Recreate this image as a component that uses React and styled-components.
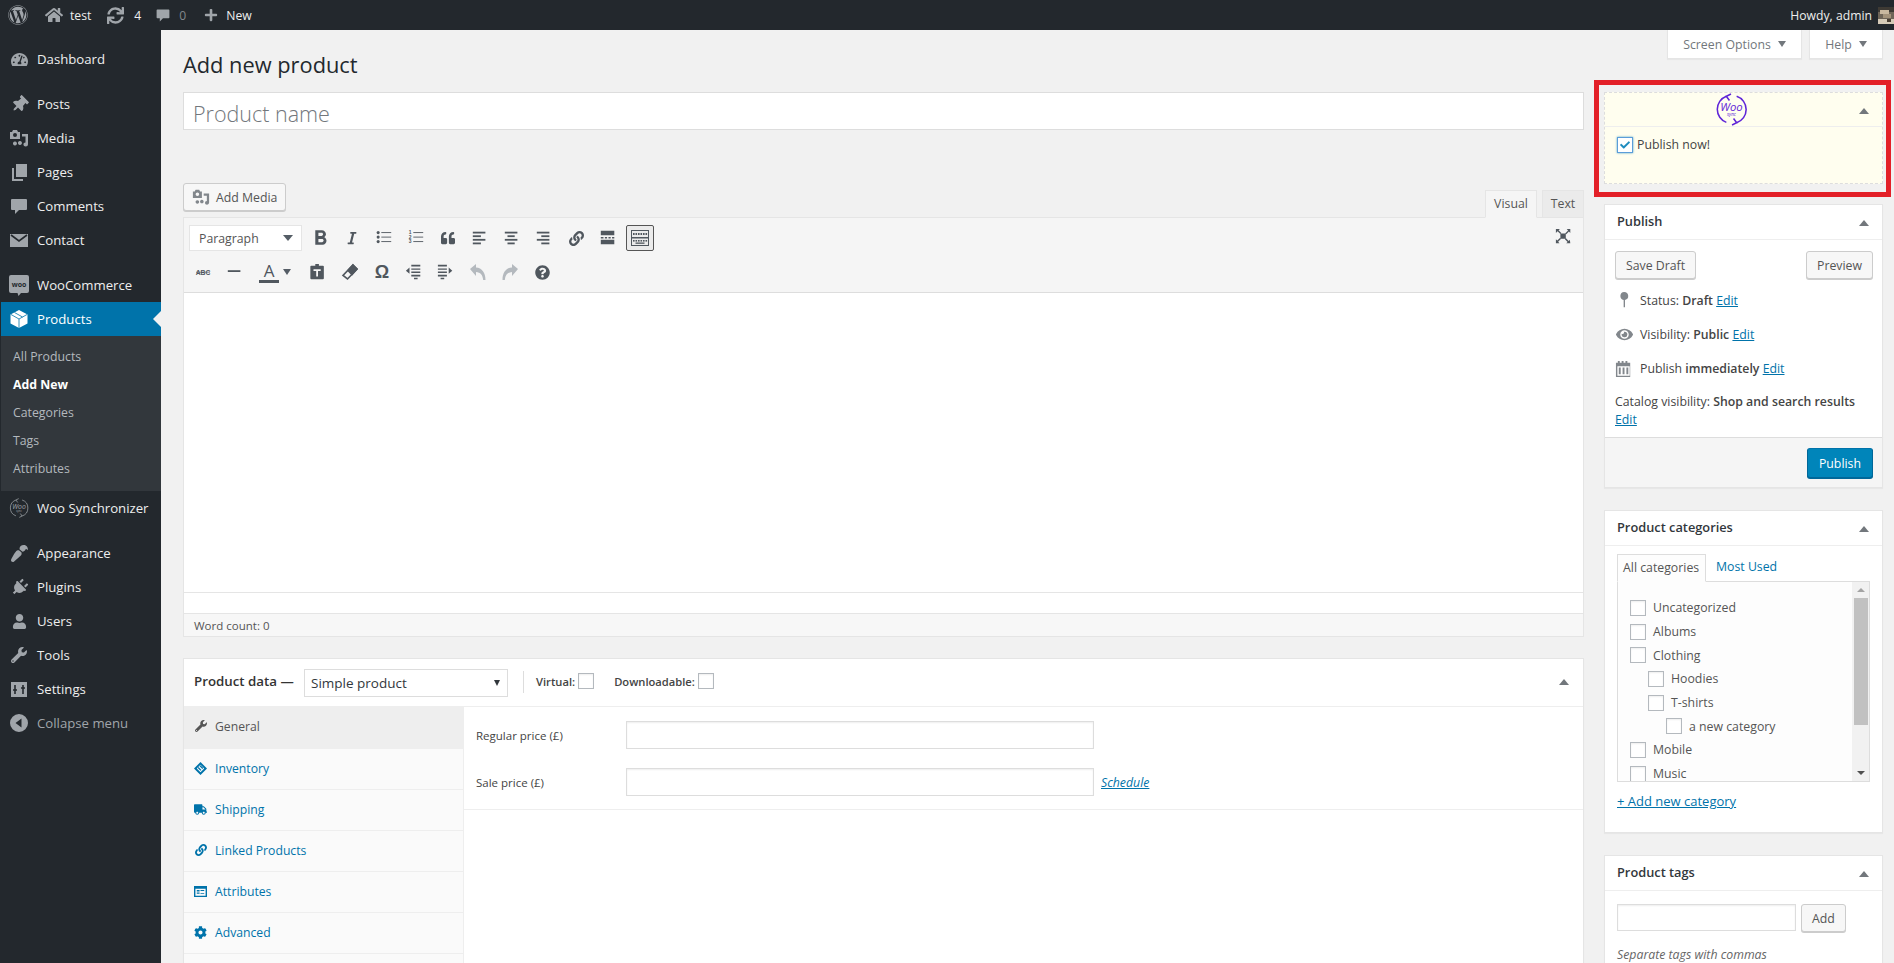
import React from 'react';
import styled, { createGlobalStyle } from 'styled-components';
import {
  FaWordpress, FaHome, FaSync, FaPlus, FaTachometerAlt, FaThumbtack, FaPaintBrush, FaPlug, FaUser, FaWrench,
  FaItalic, FaQuoteLeft, FaLink, FaQuestionCircle, FaEye, FaTruck, FaCog, FaCheck,
} from 'react-icons/fa';
import { MdFormatBold } from 'react-icons/md';

const Global = createGlobalStyle`
  html, body { margin: 0; padding: 0; height: 100%; overflow: hidden; background: #f1f1f1; }
  body { font-family: "Open Sans", "Liberation Sans", sans-serif; font-size: 12.3px; color: #444; }
  * { box-sizing: border-box; }
  input::placeholder { color: #72777c; }
`;

const Page = styled.div`
  width: 1894px;
  height: 963px;
  overflow: hidden;
  display: flex;
  flex-direction: column;
`;

const TopBar = styled.header`
  height: 30px;
  flex: none;
  background: #23282d;
  display: flex;
  align-items: center;
  color: #eee;
  padding-left: 8px;
  font-size: 12.2px;
`;

const TopItem = styled.span`
  display: flex;
  align-items: center;
  gap: ${(p) => p.$gap || 7}px;
  margin-right: ${(p) => p.$mr || 18}px;
  color: ${(p) => (p.$dim ? '#82878c' : '#eee')};
  svg { color: #a0a5aa; }
`;

const TopRight = styled.span`
  margin-left: auto;
  display: flex;
  align-items: center;
  gap: 6px;
`;

const Avatar = styled.svg`
  width: 16px;
  height: 17px;
  display: block;
`;

const Body = styled.div`
  flex: 1;
  display: flex;
  min-height: 0;
`;

const Sidebar = styled.nav`
  width: 161px;
  flex: none;
  background: #23282d;
  padding-top: 12px;
  color: #eee;
  font-size: 13.2px;
`;

const MenuItem = styled.div`
  position: relative;
  height: 34px;
  display: flex;
  align-items: center;
  gap: 8px;
  padding-left: ${(p) => (p.$active ? 8 : 9)}px;
  margin-top: ${(p) => (p.$gap ? 11 : 0)}px;
  margin-left: ${(p) => (p.$active ? 1 : 0)}px;
  background: ${(p) => (p.$active ? '#0073aa' : 'transparent')};
  color: ${(p) => (p.$active ? '#fff' : p.$muted ? '#a0a5aa' : '#eee')};
  &::after {
    content: ${(p) => (p.$active ? "''" : 'none')};
    position: absolute;
    right: 0;
    top: 9px;
    border: 8px solid transparent;
    border-right-color: #f1f1f1;
  }
`;

const MenuIcon = styled.span`
  width: 20px;
  height: 20px;
  flex: none;
  display: flex;
  align-items: center;
  justify-content: center;
  color: ${(p) => (p.$active ? '#fff' : '#a0a5aa')};
`;

const SubMenu = styled.div`
  background: #32373c;
  margin-left: 1px;
  padding: 7px 0 8px;
  height: 155px;
`;

const SubItem = styled.div`
  height: 28px;
  line-height: 28px;
  padding-left: 12px;
  font-size: 12.3px;
  color: ${(p) => (p.$active ? '#fff' : '#b4b9be')};
  font-weight: ${(p) => (p.$active ? 700 : 400)};
`;

const Main = styled.main`
  flex: 1;
  display: flex;
  gap: 20px;
  padding: 0 11px 0 22px;
  min-width: 0;
`;

const LeftCol = styled.div`
  width: 1401px;
  flex: none;
  padding-top: 20px;
`;

const RightCol = styled.aside`
  width: 279px;
  flex: none;
`;

const Title = styled.h1`
  margin: 0;
  height: 30px;
  line-height: 30px;
  font-size: 21.8px;
  font-weight: 400;
  color: #23282d;
`;

const TitleInput = styled.input`
  display: block;
  width: 100%;
  height: 38px;
  margin-top: 12px;
  padding: 4px 9px 0;
  border: 1px solid #ddd;
  background: #fff;
  font: 300 21.5px "Open Sans", sans-serif;
  outline: none;
`;

const EditorHead = styled.div`
  margin-top: 53px;
  height: 34px;
  display: flex;
  justify-content: space-between;
  align-items: flex-end;
`;

const Button = styled.span`
  display: inline-flex;
  align-items: center;
  gap: ${(p) => p.$gap || 0}px;
  height: 28px;
  padding: 0 ${(p) => p.$pad || 10}px;
  border: 1px solid #ccc;
  border-radius: 3px;
  background: #f7f7f7;
  box-shadow: 0 1px 0 #ccc;
  color: #555;
  flex: none;
`;

const AddMedia = styled(Button)`
  align-self: flex-start;
  svg { color: #82878c; }
`;

const ModeTabs = styled.div`
  display: flex;
  gap: 5px;
`;

const ModeTab = styled.span`
  height: 28px;
  width: ${(p) => p.$w}px;
  display: flex;
  align-items: center;
  justify-content: center;
  padding-bottom: 2px;
  border: 1px solid #e5e5e5;
  border-bottom: ${(p) => (p.$active ? '1px solid #f5f5f5' : '1px solid #e5e5e5')};
  background: ${(p) => (p.$active ? '#f5f5f5' : '#ebebeb')};
  color: #555;
  margin-bottom: -1px;
  position: relative;
`;

const Editor = styled.section`
  height: 420px;
  border: 1px solid #e5e5e5;
  background: #fff;
  display: flex;
  flex-direction: column;
`;

const Toolbar = styled.div`
  height: 75px;
  flex: none;
  background: #f5f5f5;
  border-bottom: 1px solid #ddd;
  padding: 7px 5px 0;
  display: flex;
  flex-direction: column;
  gap: 8px;
  position: relative;
`;

const ToolRow = styled.div`
  display: flex;
  gap: 4px;
  height: 26px;
`;

const SelectBox = styled.span`
  width: 113px;
  height: 26px;
  flex: none;
  display: flex;
  align-items: center;
  justify-content: space-between;
  padding: 0 8px 0 9px;
  background: #fff;
  border: 1px solid #e5e5e5;
  color: #555;
`;

const Caret = styled.i`
  display: block;
  width: 0;
  height: 0;
  flex: none;
  border-left: ${(p) => p.$w || 4}px solid transparent;
  border-right: ${(p) => p.$w || 4}px solid transparent;
  ${(p) => (p.$up ? 'border-bottom' : 'border-top')}: ${(p) => p.$h || 6}px solid ${(p) => p.$c || '#555d66'};
`;

const ToolBtn = styled.span`
  width: ${(p) => p.$w || 28}px;
  height: 26px;
  flex: none;
  display: flex;
  align-items: center;
  justify-content: ${(p) => (p.$w ? 'flex-start' : 'center')};
  gap: 4px;
  padding-left: ${(p) => (p.$w ? 5 : 0)}px;
  color: ${(p) => (p.$off ? '#b4b9be' : '#50575e')};
  border: 1px solid ${(p) => (p.$on ? '#555' : 'transparent')};
  border-radius: ${(p) => (p.$on ? 2 : 0)}px;
  background: ${(p) => (p.$on ? '#ebebeb' : 'transparent')};
  font: 700 18px "Liberation Sans", sans-serif;
`;

const FullScreen = styled.span`
  position: absolute;
  right: 10px;
  top: 10px;
  color: #50575e;
`;

const ColorA = styled.span`
  display: block;
  font: 400 17px/18px "Open Sans", sans-serif;
  border-bottom: 3px solid #50575e;
  width: 20px;
  text-align: center;
`;

const EditArea = styled.div`
  flex: 1;
  border-bottom: 1px solid #e5e5e5;
`;

const EditPad = styled.div`
  height: 21px;
  flex: none;
  border-bottom: 1px solid #e5e5e5;
`;

const StatusBar = styled.div`
  height: 22px;
  flex: none;
  display: flex;
  align-items: center;
  padding-left: 10px;
  background: #f7f7f7;
  font-size: 11.5px;
  color: #555;
`;

const Postbox = styled.section`
  background: #fff;
  border: 1px solid #e5e5e5;
  box-shadow: 0 1px 1px rgba(0, 0, 0, 0.04);
  margin-top: ${(p) => p.$mt || 0}px;
`;

const ProductBox = styled(Postbox)`
  height: 400px;
`;

const DataHead = styled.div`
  height: 48px;
  display: flex;
  align-items: center;
  padding: 0 14px 0 10px;
  border-bottom: 1px solid #eee;
`;

const DataTitle = styled.strong`
  width: 110px;
  flex: none;
  margin-bottom: 3px;
  font-size: 13.3px;
  font-weight: 600;
  color: #333;
`;

const DataSelect = styled.span`
  width: 204px;
  height: 28px;
  flex: none;
  display: flex;
  align-items: center;
  justify-content: space-between;
  padding: 0 7px 0 6px;
  border: 1px solid #ddd;
  font-size: 13.5px;
  color: #32373c;
`;

const VDivider = styled.span`
  width: 1px;
  height: 22px;
  background: #ddd;
  margin: 0 12px 2px 15px;
`;

const CheckLabel = styled.label`
  display: flex;
  align-items: center;
  gap: 3px;
  margin: 0 20px 3px 0;
  font-size: 11.2px;
  font-weight: 600;
  color: #444;
`;

const Box16 = styled.span`
  width: 16px;
  height: 16px;
  flex: none;
  display: flex;
  align-items: center;
  justify-content: center;
  background: #fff;
  border: 1px solid ${(p) => (p.$focus ? '#5b9dd9' : '#b4b9be')};
  box-shadow: ${(p) => (p.$focus ? '0 0 2px rgba(30,140,190,.8)' : 'inset 0 1px 2px rgba(0,0,0,.07)')};
  color: #1e8cbe;
`;

const Spacer = styled.span`
  flex: 1;
`;

const DataToggle = styled.span`
  margin-bottom: 2px;
`;

const DataBody = styled.div`
  display: flex;
  height: 260px;
`;

const DataTabs = styled.ul`
  list-style: none;
  margin: 0;
  padding: 0;
  width: 280px;
  flex: none;
  background: #fafafa;
  border-right: 1px solid #eee;
`;

const DataTab = styled.li`
  height: ${(p) => (p.$active ? 42 : 41)}px;
  display: flex;
  align-items: flex-start;
  gap: 8px;
  padding: 12px 0 0 10px;
  border-bottom: 1px solid #eee;
  background: ${(p) => (p.$active ? '#eee' : 'transparent')};
  color: ${(p) => (p.$active ? '#555' : '#0073aa')};
  font-size: 12.2px;
  line-height: 16px;
`;

const TabIcon = styled.span`
  width: 13px;
  height: 14px;
  flex: none;
  display: flex;
  align-items: center;
  justify-content: center;
`;

const Fields = styled.div`
  flex: 1;
  min-width: 0;
`;

const FieldGroup = styled.div`
  padding: 14px 0 13px 12px;
  border-bottom: 1px solid #eee;
  display: flex;
  flex-direction: column;
  gap: 19px;
`;

const FieldRow = styled.div`
  display: flex;
  align-items: center;
  gap: 7px;
`;

const FieldLabel = styled.span`
  width: 143px;
  font-size: 11.5px;
  color: #444;
`;

const TextBox = styled.input`
  display: block;
  width: ${(p) => p.$w}px;
  height: ${(p) => p.$h || 28}px;
  border: 1px solid #ddd;
  background: #fff;
  box-shadow: inset 0 1px 2px rgba(0, 0, 0, 0.07);
  outline: none;
`;

const Link = styled.a`
  color: #0073aa;
  text-decoration: underline;
  font-style: ${(p) => (p.$italic ? 'italic' : 'normal')};
  font-size: ${(p) => p.$size || 12.3}px;
`;

const ScreenMeta = styled.div`
  height: 29px;
  display: flex;
  justify-content: flex-end;
  gap: 7px;
`;

const MetaTab = styled.span`
  width: ${(p) => p.$w}px;
  display: flex;
  align-items: center;
  justify-content: center;
  gap: 7px;
  background: #fff;
  border: 1px solid #e5e5e5;
  border-top: none;
  box-shadow: 0 1px 1px rgba(0, 0, 0, 0.04);
  color: #72777c;
`;

const RedFrame = styled.div`
  margin: 21px -8px 7px -10px;
  padding: 7px 3px 8px 5px;
  border: 5px solid #e32028;
`;

const SyncBox = styled.div`
  height: 92px;
  background: #fffeef;
  border: 1px dashed #ddd;
`;

const SyncHead = styled.div`
  height: 34px;
  position: relative;
  display: flex;
  align-items: center;
  justify-content: center;
  padding-right: 24px;
  border-bottom: 1px solid #eee;
`;

const ToggleCorner = styled.span`
  position: absolute;
  right: 13px;
  top: 15px;
`;

const SyncRow = styled.label`
  display: flex;
  align-items: center;
  gap: 4px;
  padding: 9px 0 0 12px;
  font-size: 12.3px;
`;

const BoxHead = styled.div`
  position: relative;
  height: 35px;
  display: flex;
  align-items: center;
  padding: 0 0 2px 12px;
  border-bottom: 1px solid #eee;
  font-size: 12.8px;
  font-weight: 600;
  color: #32373c;
`;

const PublishActions = styled.div`
  display: flex;
  justify-content: space-between;
  padding: 11px 9px 0 10px;
`;

const MetaRows = styled.div`
  padding: 4px 10px 0;
  display: flex;
  flex-direction: column;
`;

const MetaRow = styled.div`
  height: 34px;
  display: flex;
  align-items: center;
  gap: 6px;
  white-space: nowrap;
`;

const MetaIcon = styled.span`
  width: 19px;
  flex: none;
  display: flex;
  justify-content: center;
  color: #82878c;
`;

const CatalogRow = styled.div`
  padding: 8px 10px 0;
  line-height: 18px;
  height: 52px;
`;

const Strong = styled.b`
  font-weight: 600;
`;

const PublishFoot = styled.div`
  height: 50px;
  display: flex;
  justify-content: flex-end;
  align-items: flex-start;
  padding: 10px 9px 0;
  background: #f5f5f5;
  border-top: 1px solid #ddd;
`;

const PrimaryButton = styled(Button)`
  height: 30px;
  background: #0085ba;
  border-color: #0073aa #006799 #006799;
  box-shadow: 0 1px 0 #006799;
  color: #fff;
`;

const CatBody = styled.div`
  padding: 8px 12px 0;
  height: 286px;
`;

const CatTabs = styled.div`
  display: flex;
  align-items: flex-end;
  height: 27px;
`;

const CatTab = styled.span`
  height: ${(p) => (p.$active ? 28 : 27)}px;
  margin-bottom: ${(p) => (p.$active ? -1 : 0)}px;
  padding: 0 ${(p) => (p.$active ? 5 : 10)}px 2px;
  width: ${(p) => (p.$active ? '89px' : 'auto')};
  display: flex;
  align-items: center;
  border: ${(p) => (p.$active ? '1px solid #ddd' : 'none')};
  border-bottom-color: #fdfdfd;
  background: ${(p) => (p.$active ? '#fdfdfd' : 'transparent')};
  color: ${(p) => (p.$active ? '#555' : '#0073aa')};
  position: relative;
  white-space: nowrap;
`;

const CatPanel = styled.div`
  height: 201px;
  border: 1px solid #ddd;
  background: #fdfdfd;
  display: flex;
  overflow: hidden;
`;

const CatList = styled.div`
  flex: 1;
  padding: 14px 0 0 12px;
`;

const CatRow = styled.div`
  height: 23.7px;
  display: flex;
  align-items: center;
  gap: 7px;
  padding-left: ${(p) => (p.$level || 0) * 18}px;
  color: #555;
`;

const Scrollbar = styled.div`
  width: 17px;
  flex: none;
  display: flex;
  flex-direction: column;
  align-items: center;
  background: #f1f1f1;
`;

const ScrollArrow = styled.span`
  height: 16px;
  flex: none;
  display: flex;
  align-items: center;
  justify-content: center;
`;

const ScrollThumb = styled.span`
  width: 14px;
  height: 127px;
  background: #c1c1c1;
`;

const ScrollGap = styled.span`
  flex: 1;
`;

const AddCategory = styled.div`
  margin-top: 10px;
`;

const TagsBody = styled.div`
  padding: 13px 12px 0;
`;

const TagRow = styled.div`
  display: flex;
  gap: 5px;
`;

const Hint = styled.div`
  margin-top: 14px;
  font-style: italic;
  color: #666;
`;

const Ico = styled.svg.attrs({ viewBox: '0 0 20 20' })`
  width: ${(p) => p.$s || 20}px;
  height: ${(p) => p.$s || 20}px;
  display: block;
  flex: none;
  fill: currentColor;
`;

const Turned = styled.span`
  display: flex;
  transform: rotate(${(p) => p.$deg}deg);
`;

const BubbleIcon = ({ s }) => (
  <Ico $s={s}>
    <path d="M3 3h14a1 1 0 0 1 1 1v9a1 1 0 0 1-1 1H10l-4 4v-4H3a1 1 0 0 1-1-1V4a1 1 0 0 1 1-1z" />
  </Ico>
);

const MediaIcon = ({ s }) => (
  <Ico $s={s}>
    <path fillRule="evenodd" d="M1 4h2l1-2h4l1 2h2v7H1zM6 5a2 2 0 1 0 0 4 2 2 0 0 0 0-4z" />
    <path d="M13 6h6v10.5a2.3 2 0 1 1-2.5-2V8.500H13zM6 13.500a2 2 0 1 1-.1 0zM11 13a2 2 0 1 1-.1 0z" />
  </Ico>
);

const PagesIcon = ({ s }) => (
  <Ico $s={s}>
    <path d="M7 2h11v13H7z" />
    <path d="M3 6h2v11h9v2H3z" />
  </Ico>
);

const MailIcon = () => (
  <Ico>
    <path d="M1 4h18v13H1z" />
    <path d="M2 5l8 6 8-6" fill="none" stroke="#23282d" strokeWidth="1.6" />
  </Ico>
);

const WooBubble = () => (
  <svg width="20" height="21" viewBox="0 0 20 21">
    <path d="M2 0h16a2 2 0 0 1 2 2v14a2 2 0 0 1-2 2h-6l-2.500 3-1-3H2a2 2 0 0 1-2-2V2a2 2 0 0 1 2-2z" fill="#a0a5aa" />
    <text x="10" y="11.500" fontSize="7" fontWeight="700" textAnchor="middle" fill="#23282d" fontFamily="Open Sans">woo</text>
  </svg>
);

const CubeIcon = () => (
  <svg width="20" height="20" viewBox="0 0 20 20">
    <path d="M10 1l8.500 4.500v9L10 19l-8.500-4.500v-9z" fill="#fff" />
    <path d="M2 5.500L10 10l8-4.500M10 10v9M5.500 3.500l8 4.500" fill="none" stroke="#0073aa" strokeWidth="0.8" />
  </svg>
);

const SyncLogo = ({ size, color, weight }) => (
  <svg width={size} height={size} viewBox="0 0 32 32" fill="none" stroke={color} strokeWidth={weight || 1.5}>
    <path d="M11 3.200A13.500 13.500 0 0 0 11 28.500" />
    <path d="M21 28.800A13.500 13.500 0 0 0 21 3.200" />
    <path d="M15.500 1L11 3.200l3 4M16.500 31l4.500-2.200-3-4" />
    <text x="16" y="17" fontSize="11" fontStyle="italic" textAnchor="middle" fill={color} stroke="none" fontFamily="Open Sans">Woo</text>
    <text x="16" y="22.500" fontSize="4.500" fontStyle="italic" textAnchor="middle" fill={color} stroke="none" fontFamily="Open Sans">sync</text>
  </svg>
);

const SlidersIcon = () => (
  <Ico>
    <path d="M2 3h16v15H2z" />
    <path d="M6 6v9M14 6v9M4 11h4M12 9h4" fill="none" stroke="#23282d" strokeWidth="1.6" />
  </Ico>
);

const CollapseIcon = () => (
  <Ico>
    <path fillRule="evenodd" d="M10 1a9 9 0 1 1 0 18 9 9 0 0 1 0-18zM12.500 5.500L6.500 10l6 4.500z" />
  </Ico>
);

const PinIcon = () => (
  <Ico $s={18}>
    <path d="M9 1a4.500 4.500 0 0 1 1 8.900V18H8.500V9.900A4.500 4.500 0 0 1 9 1z" />
  </Ico>
);

const CalendarIcon = () => (
  <Ico $s={19}>
    <path fillRule="evenodd" d="M1 4h2V2h2v2h2V2h2v2h2V2h2v2h3v15H1zM2.500 7.500v10h13v-10zM4 9h2v7H4zM8 9h2v7H8zM12 9h2v7h-2z" />
  </Ico>
);

const Lines = ({ rows }) => (
  <Ico $s={18}>
    {rows.map(([x, w], i) => (
      <rect key={i} x={x} y={3 + i * 4} width={w} height="2" />
    ))}
  </Ico>
);

const BulletIcon = ({ numbered }) => (
  <Ico $s={18}>
    {[4, 9, 14].map((y, i) => (
      <g key={y}>
        {numbered ? (
          <text x="3.500" y={y + 2} fontSize="5.500" fontWeight="700" textAnchor="middle" fontFamily="Liberation Sans">{i + 1}</text>
        ) : (
          <circle cx="3.500" cy={y} r="1.700" />
        )}
        <rect x="7" y={y - 0.5} width="11" height="1" />
      </g>
    ))}
  </Ico>
);

const MoreIcon = () => (
  <Ico $s={18}>
    <path d="M2 2h15v5H2zM2 12h15v5H2zM2 9h3v1.500H2zM6.500 9h2.500v1.500H6.500zM10.500 9h2.500v1.500h-2.500zM14.500 9H17v1.500h-2.500z" />
  </Ico>
);

const KeyboardIcon = () => (
  <svg width="20" height="18" viewBox="0 0 20 18" fill="#50575e">
    <path fillRule="evenodd" d="M1 1h18v16H1zM2 2v6h16V2zM2 9.500V16h16V9.500z" />
    {[3, 5.5, 8, 10.5, 13, 15.5].map((x) => (
      <rect key={x} x={x} y="4" width="1.600" height="2" />
    ))}
    {[3, 5.5, 8, 10.5, 13, 15.5].map((x) => (
      <rect key={x} x={x} y="11" width="1.600" height="1.600" />
    ))}
    <rect x="5.500" y="13.500" width="9" height="1.300" />
  </svg>
);

const StrikeAbc = () => (
  <svg width="18" height="18" viewBox="0 0 18 18" fill="#50575e">
    <text x="9" y="11.500" fontSize="6.800" fontWeight="700" textAnchor="middle" fontFamily="Liberation Sans">ABC</text>
    <rect x="2" y="8.800" width="14" height="0.700" />
  </svg>
);

const RuleIcon = () => (
  <Ico $s={18}>
    <rect x="2" y="8" width="14" height="2" />
  </Ico>
);

const PasteIcon = () => (
  <Ico $s={18}>
    <path fillRule="evenodd" d="M7 1h4v2h4.500a1 1 0 0 1 1 1v13a1 1 0 0 1-1 1h-13a1 1 0 0 1-1-1V4a1 1 0 0 1 1-1H7zM5 7v2h3v6h2V9h3V7z" />
  </Ico>
);

const EraserIcon = () => (
  <svg width="18" height="18" viewBox="0 0 18 18" fill="none" stroke="currentColor" strokeWidth="1.600">
    <path d="M12 2l4 4-9.500 10L2 12.500z" />
    <path d="M12 2l4 4-5 5.500-4-4z" fill="currentColor" />
  </svg>
);

const OutdentIcon = ({ flip }) => (
  <Ico $s={18}>
    <g transform={flip ? 'translate(18 0) scale(-1 1)' : undefined}>
      <path d="M7 2h10v2H7zM7 6h10v1.500H7zM7 9.500h10V11H7zM7 13h10v2H7zM10 16.500h4V18h-4zM1 8.500l4-3.500v7z" />
    </g>
  </Ico>
);

const UndoIcon = ({ flip }) => (
  <svg width="18" height="18" viewBox="0 0 18 18" fill="currentColor">
    <g transform={flip ? 'translate(18 0) scale(-1 1)' : undefined}>
      <path d="M1 6l6-5v3.500c6 .5 9.500 5 9.500 12.500h-2.300c-.5-5-2.700-7.700-7.200-8V13z" />
    </g>
  </svg>
);

const ExpandIcon = () => (
  <Ico $s={18}>
    <path d="M6 6h6v6H6zM1 1h4.500L4 2.500 7 5.500l-1.200 1-3-3L1 5.500zM17 1v4.500L15.500 4l-3 3-1-1.200 3-3L13 1zM1 17v-4.500L2.500 14l3-3 1 1.200-3 3L5 17zM17 17h-4.500l1.500-1.500-3-3 1.200-1 3 3 1.300-1.500z" />
  </Ico>
);

const NoteTagIcon = () => (
  <svg width="13" height="13" viewBox="0 0 14 14" fill="currentColor">
    <path fillRule="evenodd" d="M7 0l7 7-7 7-7-7zM7 3L3 7l4 4 4-4z" />
    <path d="M5 5.500l3 3-1 1-3-3zM7 3.500l3 3-1 1-3-3z" />
  </svg>
);

const PanelIcon = () => (
  <svg width="13" height="13" viewBox="0 0 14 14" fill="currentColor">
    <path fillRule="evenodd" d="M0 1h14v12H0zM1.500 4v7.500h11V4zM3 5.500h3v1.500H3zM7 5.500h4v1H7zM3 8h3v1.500H3zM7 8.500h4v1H7z" />
  </svg>
);

const AvatarImage = () => (
  <Avatar viewBox="0 0 16 17">
    <rect width="16" height="17" fill="#6f6558" />
    <rect y="0" width="16" height="5" fill="#3e3a34" />
    <rect x="2" y="3" width="9" height="4" fill="#c9b89f" />
    <rect x="5" y="7" width="8" height="4" fill="#a3927a" />
    <rect y="12" width="16" height="5" fill="#d6cbb8" />
    <rect x="9" y="12" width="4" height="3" fill="#4a3f33" />
  </Avatar>
);

const mainMenu = [
  { label: 'Dashboard', icon: <FaTachometerAlt size={17} /> },
  { label: 'Posts', gap: true, icon: <Turned $deg={45}><FaThumbtack size={17} /></Turned> },
  { label: 'Media', icon: <MediaIcon /> },
  { label: 'Pages', icon: <PagesIcon /> },
  { label: 'Comments', icon: <BubbleIcon /> },
  { label: 'Contact', icon: <MailIcon /> },
  { label: 'WooCommerce', gap: true, icon: <WooBubble /> },
];

const lowerMenu = [
  { label: 'Woo Synchronizer', icon: <SyncLogo size={22} color="#a0a5aa" weight={1.2} /> },
  { label: 'Appearance', gap: true, icon: <Turned $deg={180}><FaPaintBrush size={17} /></Turned> },
  { label: 'Plugins', icon: <Turned $deg={45}><FaPlug size={17} /></Turned> },
  { label: 'Users', icon: <FaUser size={15} /> },
  { label: 'Tools', icon: <FaWrench size={16} /> },
  { label: 'Settings', icon: <SlidersIcon /> },
  { label: 'Collapse menu', muted: true, icon: <CollapseIcon /> },
];

const subMenu = ['All Products', 'Add New', 'Categories', 'Tags', 'Attributes'];

const categories = [
  ['Uncategorized', 0],
  ['Albums', 0],
  ['Clothing', 0],
  ['Hoodies', 1],
  ['T-shirts', 1],
  ['a new category', 2],
  ['Mobile', 0],
  ['Music', 0],
];

const dataTabs = [
  { label: 'General', icon: <FaWrench size={12} />, active: true },
  { label: 'Inventory', icon: <NoteTagIcon /> },
  { label: 'Shipping', icon: <FaTruck size={13} /> },
  { label: 'Linked Products', icon: <FaLink size={12} /> },
  { label: 'Attributes', icon: <PanelIcon /> },
  { label: 'Advanced', icon: <FaCog size={13} /> },
  { label: '', icon: null },
];

const Item = ({ entry }) => (
  <MenuItem $gap={entry.gap} $muted={entry.muted}>
    <MenuIcon>{entry.icon}</MenuIcon>
    {entry.label}
  </MenuItem>
);

function App() {
  return (
    <Page>
      <Global />
      <TopBar>
        <TopItem $mr={17}><FaWordpress size={20} /></TopItem>
        <TopItem $mr={16}><FaHome size={18} />test</TopItem>
        <TopItem $mr={14} $gap={10}><FaSync size={17} />4</TopItem>
        <TopItem $dim $mr={18} $gap={8}><BubbleIcon s={16} />0</TopItem>
        <TopItem $gap={8}><FaPlus size={14} />New</TopItem>
        <TopRight>Howdy, admin<AvatarImage /></TopRight>
      </TopBar>
      <Body>
        <Sidebar>
          {mainMenu.map((m) => <Item key={m.label} entry={m} />)}
          <MenuItem $active>
            <MenuIcon $active><CubeIcon /></MenuIcon>
            Products
          </MenuItem>
          <SubMenu>
            {subMenu.map((s) => (
              <SubItem key={s} $active={s === 'Add New'}>{s}</SubItem>
            ))}
          </SubMenu>
          {lowerMenu.map((m) => <Item key={m.label} entry={m} />)}
        </Sidebar>
        <Main>
          <LeftCol>
            <Title>Add new product</Title>
            <TitleInput placeholder="Product name" />
            <EditorHead>
              <AddMedia $pad={8} $gap={6}><MediaIcon s={18} />Add Media</AddMedia>
              <ModeTabs>
                <ModeTab $w={52} $active>Visual</ModeTab>
                <ModeTab $w={42}>Text</ModeTab>
              </ModeTabs>
            </EditorHead>
            <Editor>
              <Toolbar>
                <ToolRow>
                  <SelectBox>Paragraph<Caret $w={5} $h={6} /></SelectBox>
                  <ToolBtn><MdFormatBold size={25} /></ToolBtn>
                  <ToolBtn><FaItalic size={14} /></ToolBtn>
                  <ToolBtn><BulletIcon /></ToolBtn>
                  <ToolBtn><BulletIcon numbered /></ToolBtn>
                  <ToolBtn><FaQuoteLeft size={14} /></ToolBtn>
                  <ToolBtn><Lines rows={[[2, 14], [2, 9], [2, 14], [2, 9]]} /></ToolBtn>
                  <ToolBtn><Lines rows={[[2, 14], [5, 8], [2, 14], [5, 8]]} /></ToolBtn>
                  <ToolBtn><Lines rows={[[2, 14], [7, 9], [2, 14], [7, 9]]} /></ToolBtn>
                  <ToolBtn><FaLink size={15} /></ToolBtn>
                  <ToolBtn><MoreIcon /></ToolBtn>
                  <ToolBtn $on><KeyboardIcon /></ToolBtn>
                </ToolRow>
                <ToolRow>
                  <ToolBtn><StrikeAbc /></ToolBtn>
                  <ToolBtn><RuleIcon /></ToolBtn>
                  <ToolBtn $w={47}><ColorA>A</ColorA><Caret $w={4} $h={6} /></ToolBtn>
                  <ToolBtn><PasteIcon /></ToolBtn>
                  <ToolBtn><EraserIcon /></ToolBtn>
                  <ToolBtn>Ω</ToolBtn>
                  <ToolBtn><OutdentIcon /></ToolBtn>
                  <ToolBtn><OutdentIcon flip /></ToolBtn>
                  <ToolBtn $off><UndoIcon /></ToolBtn>
                  <ToolBtn $off><UndoIcon flip /></ToolBtn>
                  <ToolBtn><FaQuestionCircle size={15} /></ToolBtn>
                </ToolRow>
                <FullScreen><ExpandIcon /></FullScreen>
              </Toolbar>
              <EditArea />
              <EditPad />
              <StatusBar>Word count: 0</StatusBar>
            </Editor>
            <ProductBox $mt={21}>
              <DataHead>
                <DataTitle>Product data —</DataTitle>
                <DataSelect>Simple product<Caret $w={3.5} $h={6} $c="#32373c" /></DataSelect>
                <VDivider />
                <CheckLabel>Virtual:<Box16 /></CheckLabel>
                <CheckLabel>Downloadable:<Box16 /></CheckLabel>
                <Spacer />
                <DataToggle><Caret $up $w={5} $h={6} $c="#72777c" /></DataToggle>
              </DataHead>
              <DataBody>
                <DataTabs>
                  {dataTabs.map((t, i) => (
                    <DataTab key={i} $active={t.active}>
                      <TabIcon>{t.icon}</TabIcon>
                      {t.label}
                    </DataTab>
                  ))}
                </DataTabs>
                <Fields>
                  <FieldGroup>
                    <FieldRow>
                      <FieldLabel>Regular price (£)</FieldLabel>
                      <TextBox $w={468} />
                    </FieldRow>
                    <FieldRow>
                      <FieldLabel>Sale price (£)</FieldLabel>
                      <TextBox $w={468} />
                      <Link $italic $size={12.3}>Schedule</Link>
                    </FieldRow>
                  </FieldGroup>
                </Fields>
              </DataBody>
            </ProductBox>
          </LeftCol>
          <RightCol>
            <ScreenMeta>
              <MetaTab $w={135}>Screen Options<Caret $w={4.5} $h={6} $c="#72777c" /></MetaTab>
              <MetaTab $w={74}>Help<Caret $w={4.5} $h={6} $c="#72777c" /></MetaTab>
            </ScreenMeta>
            <RedFrame>
              <SyncBox>
                <SyncHead>
                  <SyncLogo size={33} color="#5f25d8" />
                  <ToggleCorner><Caret $up $w={5} $h={6} $c="#72777c" /></ToggleCorner>
                </SyncHead>
                <SyncRow><Box16 $focus><FaCheck size={10} /></Box16>Publish now!</SyncRow>
              </SyncBox>
            </RedFrame>
            <Postbox>
              <BoxHead>
                Publish
                <ToggleCorner><Caret $up $w={5} $h={6} $c="#72777c" /></ToggleCorner>
              </BoxHead>
              <PublishActions>
                <Button>Save Draft</Button>
                <Button>Preview</Button>
              </PublishActions>
              <MetaRows>
                <MetaRow><MetaIcon><PinIcon /></MetaIcon><span>Status: <Strong>Draft</Strong> <Link>Edit</Link></span></MetaRow>
                <MetaRow><MetaIcon><FaEye size={17} /></MetaIcon><span>Visibility: <Strong>Public</Strong> <Link>Edit</Link></span></MetaRow>
                <MetaRow><MetaIcon><CalendarIcon /></MetaIcon><span>Publish <Strong>immediately</Strong> <Link>Edit</Link></span></MetaRow>
              </MetaRows>
              <CatalogRow>Catalog visibility: <Strong>Shop and search results</Strong><br /><Link>Edit</Link></CatalogRow>
              <PublishFoot><PrimaryButton $pad={11}>Publish</PrimaryButton></PublishFoot>
            </Postbox>
            <Postbox $mt={22}>
              <BoxHead>
                Product categories
                <ToggleCorner><Caret $up $w={5} $h={6} $c="#72777c" /></ToggleCorner>
              </BoxHead>
              <CatBody>
                <CatTabs>
                  <CatTab $active>All categories</CatTab>
                  <CatTab>Most Used</CatTab>
                </CatTabs>
                <CatPanel>
                  <CatList>
                    {categories.map(([name, level]) => (
                      <CatRow key={name} $level={level}><Box16 />{name}</CatRow>
                    ))}
                  </CatList>
                  <Scrollbar>
                    <ScrollArrow><Caret $up $w={4} $h={4} $c="#a3a3a3" /></ScrollArrow>
                    <ScrollThumb />
                    <ScrollGap />
                    <ScrollArrow><Caret $w={4} $h={4} $c="#505050" /></ScrollArrow>
                  </Scrollbar>
                </CatPanel>
                <AddCategory><Link $size={13}>+ Add new category</Link></AddCategory>
              </CatBody>
            </Postbox>
            <Postbox $mt={22}>
              <BoxHead>
                Product tags
                <ToggleCorner><Caret $up $w={5} $h={6} $c="#72777c" /></ToggleCorner>
              </BoxHead>
              <TagsBody>
                <TagRow>
                  <TextBox $w={179} $h={27} />
                  <Button $pad={10}>Add</Button>
                </TagRow>
                <Hint>Separate tags with commas</Hint>
              </TagsBody>
            </Postbox>
          </RightCol>
        </Main>
      </Body>
    </Page>
  );
}

export default App;
